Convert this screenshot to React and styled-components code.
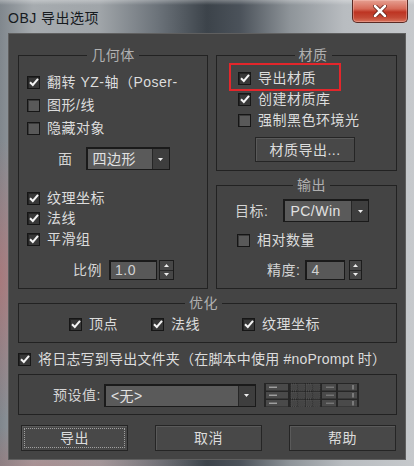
import React from 'react';
import styled, { createGlobalStyle } from 'styled-components';

const GlobalStyle = createGlobalStyle`
  html, body {
    margin: 0;
    padding: 0;
    background: #8d9398;
  }
  body {
    font-family: "Liberation Sans", "Noto Sans CJK SC", sans-serif;
    font-size: 14px;
    line-height: 16px;
  }
`;

// window frame (aero glass)
const Window = styled.div`
  width: 414px;
  height: 466px;
  box-sizing: border-box;
  padding: 0 8px 6px 8px;
  display: flex;
  flex-direction: column;
  background:
    linear-gradient(180deg, rgba(255, 255, 255, 0.3) 0, rgba(255, 255, 255, 0) 5px),
    radial-gradient(ellipse 40px 140px at 0 60%, rgba(200, 110, 110, 0.55), rgba(200, 110, 110, 0)),
    radial-gradient(ellipse 160px 40px at 40px 100%, rgba(170, 110, 110, 0.45), rgba(170, 110, 110, 0)),
    linear-gradient(90deg, #80878d 0%, #a6abaf 8%, #a0a5a9 24%, #6c737a 38%, #3c434a 50%, #4b525a 58%, #8e9499 70%, #b8bcc0 83%, #c6c9cc 100%);
`;

const TitleBar = styled.div`
  height: 33px;
  display: flex;
  justify-content: space-between;
  align-items: flex-start;
`;

const Title = styled.div`
  margin-top: 10px;
  color: #161a1e;
  font-size: 14px;
  letter-spacing: 0.5px;
`;

const CloseButton = styled.div`
  width: 56px;
  height: 23px;
  margin-right: -2px;
  box-sizing: border-box;
  border: 1px solid #5a2a24;
  border-top: none;
  border-radius: 0 0 5px 5px;
  background: linear-gradient(180deg, #e6a092 0%, #d66a58 40%, #bd3422 55%, #c44a36 80%, #d9735c 100%);
  box-shadow: inset 0 0 0 1px rgba(255, 210, 200, 0.35);
  display: flex;
  align-items: center;
  justify-content: center;
`;

const Client = styled.div`
  flex: 1;
  background: #444444;
  border: 1px solid #5f5f5f;
  padding: 13px 8px 0 9px;
  display: flex;
  flex-direction: column;
  color: #dcdcdc;
  letter-spacing: 0.5px;
`;

const TopRow = styled.div`
  display: grid;
  grid-template-columns: 190px 181px;
  column-gap: 8px;
  align-items: stretch;
`;

const RightColumn = styled.div`
  display: flex;
  flex-direction: column;
  gap: 6px;
`;

const Group = styled.fieldset`
  margin: ${(p) => p.$mt || 0}px 0 0 0;
  padding: ${(p) => p.$pad};
  border: 1px solid #222222;
  min-width: 0;
  display: flex;
  flex-direction: column;
  flex: ${(p) => (p.$grow ? 1 : 'none')};
`;

const Legend = styled.legend`
  margin: 0 auto;
  padding: 0 4px;
  color: #b0b0b0;
  line-height: 16px;
`;

const Option = styled.div`
  display: flex;
  align-items: center;
  gap: 7px;
  height: 16px;
  white-space: nowrap;
  margin-top: ${(p) => p.$mt || 0}px;
  padding-left: ${(p) => p.$pl || 0}px;
  letter-spacing: ${(p) => p.$ls ?? 0.5}px;
`;

const Highlight = styled.div`
  align-self: flex-start;
  margin: -7px 0 -5px -9px;
  padding: 5px 23px 3px 7px;
  border: 2px solid #e3262b;
`;

const Box = styled.span`
  flex: none;
  width: 13px;
  height: 13px;
  box-sizing: border-box;
  border: 1px solid #161616;
  background: ${(p) => (p.$checked ? '#383838' : '#595959')};
  box-shadow: inset 1px 1px 0 rgba(0, 0, 0, 0.35);
  display: flex;
  align-items: center;
  justify-content: center;
`;

const FieldRow = styled.div`
  display: flex;
  align-items: center;
  gap: ${(p) => p.$gap}px;
  margin-top: ${(p) => p.$mt || 0}px;
  padding-left: ${(p) => p.$pl || 0}px;
  white-space: nowrap;
`;

const Label = styled.span`
  color: #d4d4d4;
`;

const Select = styled.div`
  width: ${(p) => p.$w}px;
  height: 23px;
  box-sizing: border-box;
  display: flex;
  border: 1px solid #1a1a1a;
  border-top-width: 2px;
  border-left-width: 2px;
  background: #5a5a5a;
`;

const SelectValue = styled.span`
  flex: 1;
  padding-left: 5px;
  line-height: 20px;
  color: #e2e2e2;
`;

const SelectArrow = styled.span`
  width: 16px;
  background: #3e3e3e;
  border-left: 1px solid #262626;
  display: flex;
  align-items: center;
  justify-content: center;
`;

const Spinner = styled.div`
  display: flex;
  gap: ${(p) => p.$gap}px;
  height: 20px;
`;

const SpinInput = styled.span`
  width: ${(p) => p.$w}px;
  box-sizing: border-box;
  border: 1px solid #1a1a1a;
  border-top-width: 2px;
  border-left-width: 2px;
  background: #585858;
  padding-left: 4px;
  line-height: 17px;
  color: #d2d2d2;
`;

const SpinArrows = styled.div`
  width: ${(p) => p.$w}px;
  box-sizing: border-box;
  border: 1px solid #1c1c1c;
  background: #474747;
  display: flex;
  flex-direction: column;
`;

const SpinHalf = styled.span`
  flex: 1;
  display: flex;
  align-items: center;
  justify-content: center;
  & + & {
    border-top: 1px solid #262626;
  }
`;

const Button = styled.div`
  width: ${(p) => p.$w}px;
  height: ${(p) => p.$h}px;
  box-sizing: border-box;
  background: #484848;
  border: 1px solid #252525;
  box-shadow: inset 1px 1px 0 #5a5a5a;
  color: #dcdcdc;
  display: flex;
  align-items: center;
  justify-content: center;
  outline: ${(p) => (p.$focused ? '1px dotted #a0a0a0' : 'none')};
  outline-offset: -4px;
`;

const OptimizeRow = styled.div`
  display: grid;
  grid-template-columns: 82px 91px auto;
  margin-top: 5px;
  padding-left: 50px;
`;

const PresetBox = styled.div`
  margin-top: 7px;
  border: 1px solid #222222;
  padding: 8px 0 7px 34px;
  display: flex;
  align-items: center;
`;

const ButtonRow = styled.div`
  margin-top: 10px;
  padding-left: 3px;
  display: flex;
  gap: 27px;
`;

const Tick = () => (
  <svg width="10" height="10" viewBox="0 0 10 10">
    <path d="M1 5.2 L3.8 8 L9 1.8" fill="none" stroke="#f4f4f4" strokeWidth="2" />
  </svg>
);

const Check = ({ checked, children, mt, pl, ls }) => (
  <Option $mt={mt} $pl={pl} $ls={ls}>
    <Box $checked={checked}>{checked && <Tick />}</Box>
    <span>{children}</span>
  </Option>
);

const Triangle = ({ up }) => (
  <svg width="5" height="3" viewBox="0 0 5 3">
    <path d={up ? 'M0 3 L2.5 0 L5 3 Z' : 'M0 0 L5 0 L2.5 3 Z'} fill="#eeeeee" />
  </svg>
);

const Dropdown = ({ w, value }) => (
  <Select $w={w}>
    <SelectValue>{value}</SelectValue>
    <SelectArrow>
      <Triangle />
    </SelectArrow>
  </Select>
);

const Spin = ({ w, aw, gap, value }) => (
  <Spinner $gap={gap}>
    <SpinInput $w={w}>{value}</SpinInput>
    <SpinArrows $w={aw}>
      <SpinHalf>
        <Triangle up />
      </SpinHalf>
      <SpinHalf>
        <Triangle />
      </SpinHalf>
    </SpinArrows>
  </Spinner>
);

const CloseX = () => (
  <svg width="14" height="12" viewBox="0 0 14 12">
    <path d="M2 1 L12 11 M12 1 L2 11" stroke="#5a1a12" strokeWidth="4.2" strokeLinecap="round" />
    <path d="M2 1 L12 11 M12 1 L2 11" stroke="#ffffff" strokeWidth="2.6" strokeLinecap="round" />
  </svg>
);

// preset slot grid icon
const PresetSlots = () => {
  const rows = [1, 9, 17];
  const small = [27, 34.5, 42, 49.5];
  return (
    <svg width="95" height="24" viewBox="0 0 95 24">
      <rect x="0" y="0" width="95" height="24" fill="#262626" />
      {rows.map((y) => (
        <g key={y}>
          <rect x="2" y={y} width="22" height="6.5" fill="#4a4a4a" />
          <line x1="5" y1={y + 3.2} x2="13" y2={y + 3.2} stroke="#c4c4c4" strokeWidth="1" />
          {small.map((x) => (
            <rect key={x} x={x} y={y} width="6.3" height="6.5" fill="#454545" stroke="#666" strokeWidth="0.6" strokeDasharray="1 1" />
          ))}
          <rect x="58" y={y} width="14" height="6.5" fill="#4a4a4a" />
          <line x1="62" y1={y + 3.2} x2="70" y2={y + 3.2} stroke="#888" strokeWidth="1" />
          <rect x="74" y={y} width="19" height="6.5" fill="#4a4a4a" />
          <line x1="89" y1={y + 1} x2="89" y2={y + 5.5} stroke="#aaa" strokeWidth="1" />
        </g>
      ))}
    </svg>
  );
};

export default function App() {
  return (
    <>
      <GlobalStyle />
      <Window>
        <TitleBar>
          <Title>OBJ 导出选项</Title>
          <CloseButton>
            <CloseX />
          </CloseButton>
        </TitleBar>
        <Client>
          <TopRow>
            <Group $pad="11px 8px 7px 8px">
              <Legend>几何体</Legend>
              <Check checked>翻转 YZ-轴（Poser-</Check>
              <Check mt={7}>图形/线</Check>
              <Check mt={7}>隐藏对象</Check>
              <FieldRow $gap={13} $mt={11} $pl={31}>
                <Label>面</Label>
                <Dropdown w={84} value="四边形" />
              </FieldRow>
              <Check checked mt={20}>纹理坐标</Check>
              <Check checked mt={4}>法线</Check>
              <Check checked mt={5}>平滑组</Check>
              <FieldRow $gap={7} $mt={13} $pl={46}>
                <Label>比例</Label>
                <Spin w={48} aw={15} gap={2} value="1.0" />
              </FieldRow>
            </Group>
            <RightColumn>
              <Group $pad="7px 8px 8px 21px">
                <Legend>材质</Legend>
                <Highlight>
                  <Check checked>导出材质</Check>
                </Highlight>
                <Check checked mt={5}>创建材质库</Check>
                <Check mt={5}>强制黑色环境光</Check>
                <FieldRow $gap={0} $mt={9} $pl={17}>
                  <Button $w={100} $h={25}>材质导出...</Button>
                </FieldRow>
              </Group>
              <Group $grow $pad="6px 8px 8px 18px">
                <Legend>输出</Legend>
                <FieldRow $gap={15}>
                  <Label>目标:</Label>
                  <Dropdown w={86} value="PC/Win" />
                </FieldRow>
                <Check mt={10} pl={2}>相对数量</Check>
                <FieldRow $gap={5} $mt={12} $pl={32}>
                  <Label>精度:</Label>
                  <Spin w={40} aw={13} gap={4} value="4" />
                </FieldRow>
              </Group>
            </RightColumn>
          </TopRow>
          <Group $mt={6} $pad="0 8px 10px 0">
            <Legend>优化</Legend>
            <OptimizeRow>
              <Check checked>顶点</Check>
              <Check checked>法线</Check>
              <Check checked>纹理坐标</Check>
            </OptimizeRow>
          </Group>
          <Check checked mt={8} ls={0.2}>将日志写到导出文件夹（在脚本中使用 #noPrompt 时）</Check>
          <PresetBox>
            <Label>预设值:</Label>
            <FieldRow $gap={8} $pl={3}>
              <Dropdown w={152} value="<无>" />
              <PresetSlots />
            </FieldRow>
          </PresetBox>
          <ButtonRow>
            <Button $w={107} $h={26} $focused>导出</Button>
            <Button $w={107} $h={26}>取消</Button>
            <Button $w={107} $h={26}>帮助</Button>
          </ButtonRow>
        </Client>
      </Window>
    </>
  );
}
